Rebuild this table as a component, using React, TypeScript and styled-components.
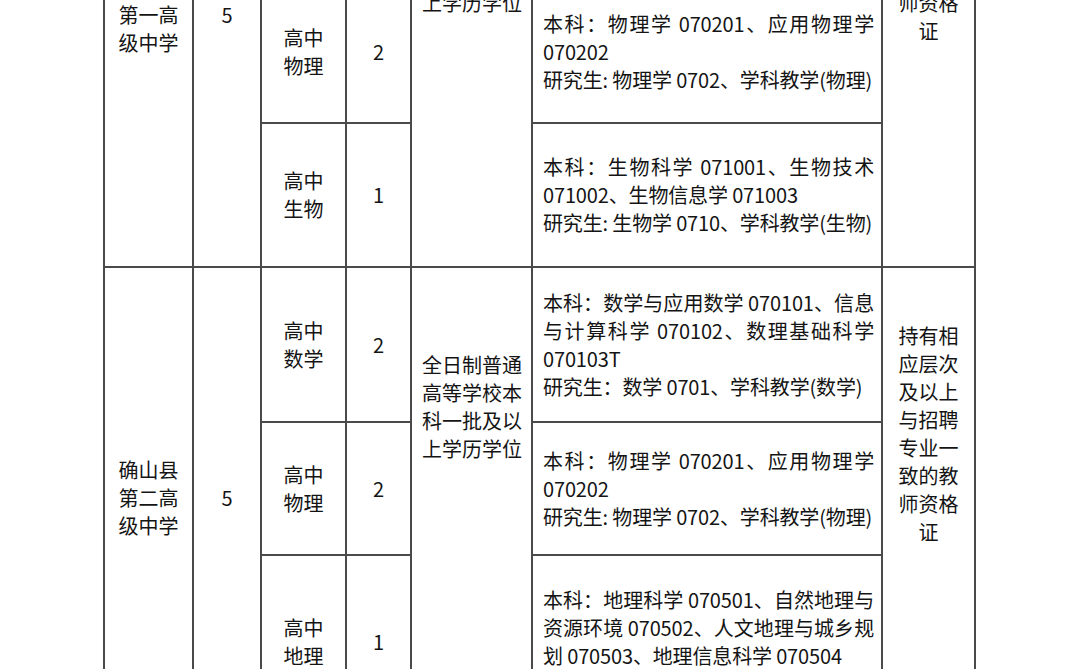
import React from 'react';
import styled, { createGlobalStyle } from 'styled-components';

const GlobalStyle = createGlobalStyle`
  html, body {
    margin: 0;
    padding: 0;
    background: #fff;
  }
  body {
    font-family: "Noto Sans CJK SC", "Noto Sans", sans-serif;
    color: #141414;
  }
`;

const Page = styled.div`
  height: 669px;
  overflow: hidden;
  background: #fff;
`;

// the screenshot shows the middle of a long table, so it is pulled up
const Table = styled.table`
  width: 871px;
  margin: -238px 0 0 103px;
  border-collapse: collapse;
  table-layout: fixed;
  font-size: 20px;
  line-height: 28px;
`;

const Col = styled.col<{ $w: number }>`
  width: ${({ $w }) => $w}px;
`;

const Row = styled.tr<{ $h: number }>`
  height: ${({ $h }) => $h}px;
`;

const BaseCell = styled.td`
  border: 2px solid #4a4a4a;
  padding: 0;
  vertical-align: middle;
  text-align: center;
`;

const NameCell = styled(BaseCell)`
  padding: 0 13px;
`;

const CountCell = styled(BaseCell)``;

const SubjectCell = styled(BaseCell)`
  padding: 0 21px;
`;

const NumberCell = styled(BaseCell)``;

const EduCell = styled(BaseCell)<{ $top: number }>`
  vertical-align: top;
  text-align: left;
  padding: ${({ $top }) => $top}px 8px 0 10px;
`;

const MajorCell = styled(BaseCell)`
  text-align: justify;
  letter-spacing: -0.15px;
  padding: 0 7px 0 10px;
`;

const Para = styled.p`
  margin: 0;
`;

const CertCell = styled(BaseCell)<{ $top: number }>`
  vertical-align: top;
  padding: ${({ $top }) => $top}px 15px 0;
`;

interface Post {
  subject: string;
  count: number;
  height: number;
  major: string[];
}

interface School {
  name: string;
  total: number;
  eduTop: number;
  certTop: number;
  posts: Post[];
}

const COLUMNS = [89, 68, 85, 65, 121, 350, 93];

const EDU = '全日制普通高等学校本科一批及以上学历学位';
const CERT = '持有相应层次及以上与招聘专业一致的教师资格证';

const MATH = ['本科：数学与应用数学 070101、信息与计算科学 070102、数理基础科学 070103T', '研究生：数学 0701、学科教学(数学)'];
const PHYS = ['本科：物理学 070201、应用物理学 070202', '研究生: 物理学 0702、学科教学(物理)'];
const BIO = ['本科：生物科学 071001、生物技术 071002、生物信息学 071003', '研究生: 生物学 0710、学科教学(生物)'];
const GEO = [
  '本科：地理科学 070501、自然地理与资源环境 070502、人文地理与城乡规划 070503、地理信息科学 070504',
  '研究生: 地理学 0705、学科教学(地理)',
];

const schools: School[] = [
  {
    name: '确山县第一高级中学',
    total: 5,
    eduTop: 141,
    certTop: 57,
    posts: [
      { subject: '高中数学', count: 2, height: 218, major: MATH },
      { subject: '高中物理', count: 2, height: 142, major: PHYS },
      { subject: '高中生物', count: 1, height: 144, major: BIO },
    ],
  },
  {
    name: '确山县第二高级中学',
    total: 5,
    eduTop: 83,
    certTop: 54,
    posts: [
      { subject: '高中数学', count: 2, height: 155, major: MATH },
      { subject: '高中物理', count: 2, height: 133, major: PHYS },
      { subject: '高中地理', count: 1, height: 174, major: GEO },
    ],
  },
];

const App: React.FC = () => (
  <Page>
    <GlobalStyle />
    <Table>
      <colgroup>
        {COLUMNS.map((w, i) => (
          <Col key={i} $w={w} />
        ))}
      </colgroup>
      <tbody>
        {schools.map((school) =>
          school.posts.map((post, i) => (
            <Row key={school.name + post.subject} $h={post.height}>
              {i === 0 && (
                <>
                  <NameCell rowSpan={school.posts.length}>{school.name}</NameCell>
                  <CountCell rowSpan={school.posts.length}>{school.total}</CountCell>
                </>
              )}
              <SubjectCell>{post.subject}</SubjectCell>
              <NumberCell>{post.count}</NumberCell>
              {i === 0 && (
                <EduCell rowSpan={school.posts.length} $top={school.eduTop}>
                  {EDU}
                </EduCell>
              )}
              <MajorCell>
                {post.major.map((line) => (
                  <Para key={line}>{line}</Para>
                ))}
              </MajorCell>
              {i === 0 && (
                <CertCell rowSpan={school.posts.length} $top={school.certTop}>
                  {CERT}
                </CertCell>
              )}
            </Row>
          ))
        )}
      </tbody>
    </Table>
  </Page>
);

export default App;
